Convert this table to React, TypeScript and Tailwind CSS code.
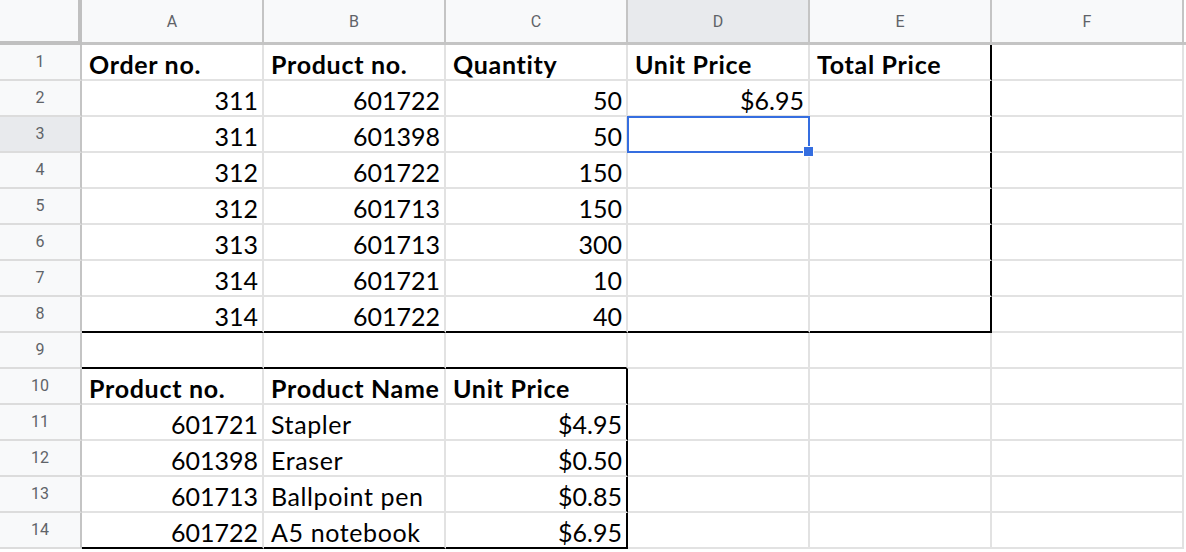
import React from "react";

type Cell = { t: string; b?: boolean; r?: boolean };

const rows: Cell[][] = [
  [
    { t: "Order no.", b: true },
    { t: "Product no.", b: true },
    { t: "Quantity", b: true },
    { t: "Unit Price", b: true },
    { t: "Total Price", b: true },
    { t: "" },
  ],
  [{ t: "311", r: true }, { t: "601722", r: true }, { t: "50", r: true }, { t: "$6.95", r: true }, { t: "" }, { t: "" }],
  [{ t: "311", r: true }, { t: "601398", r: true }, { t: "50", r: true }, { t: "" }, { t: "" }, { t: "" }],
  [{ t: "312", r: true }, { t: "601722", r: true }, { t: "150", r: true }, { t: "" }, { t: "" }, { t: "" }],
  [{ t: "312", r: true }, { t: "601713", r: true }, { t: "150", r: true }, { t: "" }, { t: "" }, { t: "" }],
  [{ t: "313", r: true }, { t: "601713", r: true }, { t: "300", r: true }, { t: "" }, { t: "" }, { t: "" }],
  [{ t: "314", r: true }, { t: "601721", r: true }, { t: "10", r: true }, { t: "" }, { t: "" }, { t: "" }],
  [{ t: "314", r: true }, { t: "601722", r: true }, { t: "40", r: true }, { t: "" }, { t: "" }, { t: "" }],
  [{ t: "" }, { t: "" }, { t: "" }, { t: "" }, { t: "" }, { t: "" }],
  [
    { t: "Product no.", b: true },
    { t: "Product Name", b: true },
    { t: "Unit Price", b: true },
    { t: "" },
    { t: "" },
    { t: "" },
  ],
  [{ t: "601721", r: true }, { t: "Stapler" }, { t: "$4.95", r: true }, { t: "" }, { t: "" }, { t: "" }],
  [{ t: "601398", r: true }, { t: "Eraser" }, { t: "$0.50", r: true }, { t: "" }, { t: "" }, { t: "" }],
  [{ t: "601713", r: true }, { t: "Ballpoint pen" }, { t: "$0.85", r: true }, { t: "" }, { t: "" }, { t: "" }],
  [{ t: "601722", r: true }, { t: "A5 notebook" }, { t: "$6.95", r: true }, { t: "" }, { t: "" }, { t: "" }],
];

const cols = ["A", "B", "C", "D", "E", "F"];

function rightBlack(ri: number, ci: number) {
  const row = ri + 1;
  if (ci === 4 && row >= 1 && row <= 8) return true;
  if (ci === 2 && row >= 10 && row <= 14) return true;
  return false;
}
function bottomBlack(ri: number, ci: number) {
  const row = ri + 1;
  if (row === 8 && ci <= 4) return true;
  if (row === 9 && ci <= 2) return true;
  if (row === 14 && ci <= 2) return true;
  return false;
}

export default function App() {
  return (
    <div
      className="w-[1186px] h-[552px] bg-white overflow-hidden"
      style={{ fontFamily: "Lato, 'Noto Sans', sans-serif" }}
    >
      <div className="grid grid-cols-[82px_182px_182px_182px_182px_182px_192px_1fr] grid-rows-[45px_repeat(14,36px)]">
        {/* header row */}
        <div className="bg-[#f8f9fa] border-r-4 border-b-4 border-[#c0c0c0]" />
        {cols.map((c) => (
          <div
            key={c}
            className={
              (c === "D" ? "bg-[#e8eaed] " : "bg-[#f8f9fa] ") +
              "flex items-center justify-center border-r-2 border-b-[3px] border-[#c4c4c4] text-[16px] text-[#5f6368] pt-[1px]"
            }
            style={{ fontFamily: "Roboto, Arial, sans-serif" }}
          >
            {c}
          </div>
        ))}
        <div className="bg-white border-b-[3px] border-[#c4c4c4]" />

        {rows.map((row, ri) => (
          <React.Fragment key={ri}>
            <div
              className={
                (ri === 2 ? "bg-[#e8eaed] " : "bg-[#f8f9fa] ") +
                "flex items-center justify-center border-r-2 border-b-2 border-r-[#c4c4c4] border-b-[#dcdcdc] text-[16px] text-[#5f6368]"
              }
              style={{ fontFamily: "Roboto, Arial, sans-serif" }}
            >
              {ri + 1}
            </div>
            {row.map((cell, ci) => (
              <div
                key={ci}
                className={
                  "relative flex items-end border-r-2 border-b-2 whitespace-nowrap text-[25px] leading-none text-black pb-[2px] " +
                  (rightBlack(ri, ci) ? "border-r-black " : "border-r-[#e2e2e2] ") +
                  (bottomBlack(ri, ci) ? "border-b-black " : "border-b-[#e2e2e2] ") +
                  (cell.r ? "justify-end pr-[4px] " : "justify-start pl-[7px] ") +
                  (cell.b
                    ? "font-bold tracking-[0.7px]"
                    : cell.r
                    ? "font-normal"
                    : "font-normal tracking-[0.6px]")
                }
              >
                {cell.t}
                {ri === 2 && ci === 3 && (
                  <>
                    <div className="absolute z-10 -left-[1px] -top-[1px] -right-[2px] -bottom-[2px] border-2 border-[#356ee0]" />
                    <div className="absolute z-20 -right-[6px] -bottom-[6px] w-[11px] h-[11px] bg-[#356ee0] border border-white" />
                  </>
                )}
              </div>
            ))}
            <div className="bg-white" />
          </React.Fragment>
        ))}
      </div>
    </div>
  );
}
